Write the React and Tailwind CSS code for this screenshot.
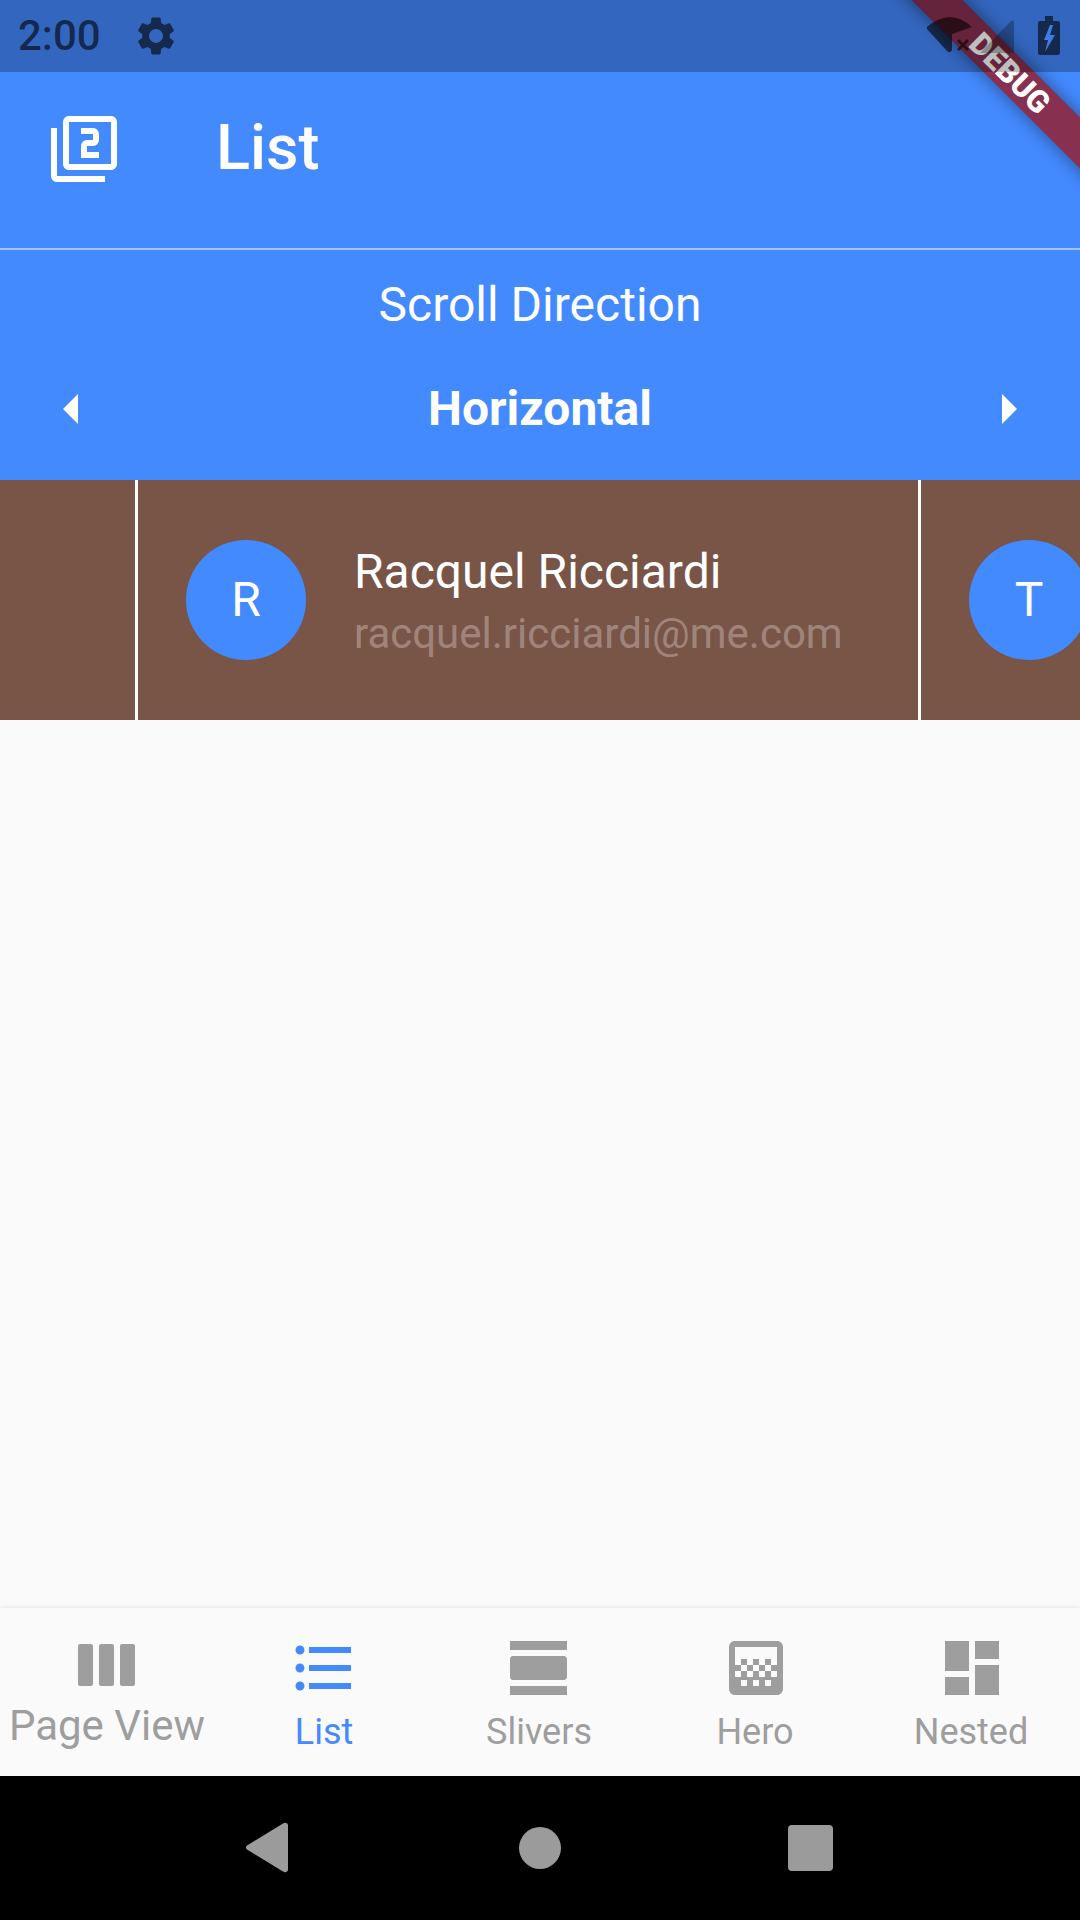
import { MdFilter2, MdArrowLeft, MdArrowRight, MdFormatListBulleted, MdViewDay, MdGradient, MdDashboard, MdSettings } from 'react-icons/md'

const font = { fontFamily: 'Roboto, sans-serif' }

export default function App(){
  return (
    <div style={font} className="relative w-[1080px] h-[1920px] overflow-hidden flex flex-col bg-[#fafafa] font-['Roboto',sans-serif]">
      <header className="bg-[#448aff] text-white pt-[72px]">
        <div className="h-[178px] pb-[26px] pl-[48px] flex items-center border-b-2 border-white/50">
          <MdFilter2 size={72} className="mt-[4px]" />
          <h1 className="ml-[96px] text-[63px] leading-none font-medium">List</h1>
        </div>
        <div className="h-[230px] flex flex-col items-center">
          <div className="mt-[27px] text-[48px] leading-[56px]">Scroll Direction</div>
          <div className="mt-[40px] w-full px-[36px] flex items-center justify-between">
            <MdArrowLeft size={72} />
            <span className="text-[48px] leading-[72px] font-bold">Horizontal</span>
            <MdArrowRight size={72} />
          </div>
        </div>
      </header>

      <div className="h-[240px] bg-[#795548] flex overflow-hidden shrink-0">
        <div className="w-[135px] shrink-0" />
        <Divider />
        <Person letter="R" name="Racquel Ricciardi" email="racquel.ricciardi@me.com" />
        <Divider />
        <Person letter="T" />
      </div>

      <main className="flex-1" />

      <BottomNav />
      <SystemNav />
      <DebugBanner />
      <StatusBar />
    </div>
  )
}

function Divider(){
  return <div className="w-[3px] shrink-0 bg-white" />
}

function Person({letter, name, email}){
  return (
    <div className="w-[780px] shrink-0 pl-[48px] flex items-center">
      <div className="w-[120px] h-[120px] rounded-full bg-[#448aff] text-white text-[48px] flex items-center justify-center shrink-0">{letter}</div>
      {name && (
        <div className="ml-[48px] pt-[3px]">
          <div className="text-white text-[48px] leading-[56px]">{name}</div>
          <div className="mt-[9px] text-white/30 text-[42px] leading-[50px]">{email}</div>
        </div>
      )}
    </div>
  )
}

// system overlay, sits over the app and the debug banner
function StatusBar(){
  return (
    <div className="absolute top-0 left-0 w-full h-[72px] bg-black/25 text-black/60 flex items-center">
      <span className="ml-[18px] text-[42px] leading-none font-medium">2:00</span>
      <MdSettings size={46} className="ml-[32px]" />
      <svg className="ml-auto mr-[20px]" width="134" height="72" viewBox="926 0 134 72">
        <path fill="currentColor" d="M927 27Q950 7 972 27L952 34v16q-2 4-5 1L927 29z" />
        <path fill="currentColor" d="M957 41l2-2 4 4 4-4 2 2-4 4 4 4-2 2-4-4-4 4-2-2 4-4z" />
        <path fill="currentColor" fillOpacity=".45" d="M980 53 1011 21q3-2 3 1v31z" />
        <path fill="currentColor" d="M1045 16h8v5h5a2 2 0 0 1 2 2v30a2 2 0 0 1-2 2h-18a2 2 0 0 1-2-2V23a2 2 0 0 1 2-2h5z" />
        <path fill="#3f7ce0" d="M1050 25l-6 15h4l-3 12 10-17h-5l3-10z" />
      </svg>
    </div>
  )
}

function PageViewIcon(){
  return (
    <svg width="72" height="72" viewBox="0 0 24 24" fill="currentColor">
      <rect x="2" y="4" width="5" height="14" rx=".7" />
      <rect x="9" y="4" width="5" height="14" rx=".7" />
      <rect x="16" y="4" width="5" height="14" rx=".7" />
    </svg>
  )
}

function BottomNav(){
  return (
    <nav className="h-[168px] bg-[#fafafa] shadow-[0_-1px_4px_rgba(0,0,0,0.08)] flex shrink-0">
      <NavItem icon={PageViewIcon} label="Page View" large />
      <NavItem icon={MdFormatListBulleted} label="List" active />
      <NavItem icon={MdViewDay} label="Slivers" />
      <NavItem icon={MdGradient} label="Hero" />
      <NavItem icon={MdDashboard} label="Nested" />
    </nav>
  )
}

function NavItem({icon: Icon, label, active, large}){
  let labelClass = 'text-[36px] leading-[42px] mt-[7px] pr-[2px]'
  if(large) labelClass = 'text-[42px] leading-[50px] -mt-[3px] pr-[2px] whitespace-nowrap'
  if(active) labelClass = 'text-[36px] leading-[42px] mt-[7px]'
  return (
    <div className={`w-[216px] pt-[24px] flex flex-col items-center ${active ? 'text-[#448aff]' : 'text-[#9e9e9e]'}`}>
      <Icon size={72} />
      <span className={labelClass}>{label}</span>
    </div>
  )
}

function SystemNav(){
  return (
    <div className="h-[144px] bg-black shrink-0 flex items-center justify-center">
      <svg width="1080" height="144" viewBox="0 0 1080 144">
        <path fill="#9b9b9b" d="M247 69.500 283 47.500c2-1.500 5-.5 5 2v44c0 2.500-3 3.500-5 2L247 73.500c-1.500-1-1.500-3 0-4z" />
        <circle cx="540" cy="72" r="21" fill="#9b9b9b" />
        <rect x="788" y="49" width="45" height="46" rx="4" fill="#9b9b9b" />
      </svg>
    </div>
  )
}

function DebugBanner(){
  return (
    <div className="absolute left-[828px] top-[53px] w-[360px] h-[36px] rotate-45 bg-[#883050] shadow-[0_0_18px_rgba(0,0,0,0.45)] flex items-center justify-center">
      <span className="translate-x-[3px] text-white text-[31px] leading-none font-black">DEBUG</span>
    </div>
  )
}
